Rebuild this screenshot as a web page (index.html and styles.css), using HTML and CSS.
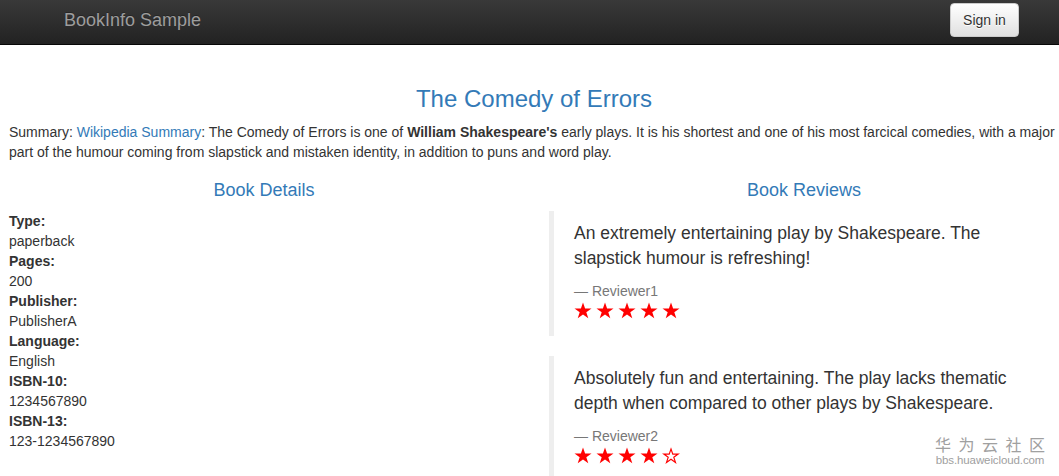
FILE: index.html
```html
<!DOCTYPE html>
<html lang="en">
<head>
<meta charset="utf-8">
<title>Simple Bookstore App</title>
<link rel="stylesheet" href="styles.css">
</head>
<body>
<nav class="navbar">
  <div class="navbar-inner">
    <a class="brand" href="#">BookInfo Sample</a>
    <button type="button" class="btn-signin">Sign in</button>
  </div>
</nav>

<main class="page">
  <h3 class="title">The Comedy of Errors</h3>
  <p class="summary">Summary: <a href="#">Wikipedia Summary</a>: The Comedy of Errors is one of <b>William Shakespeare's</b> early plays. It is his shortest and one of his most farcical comedies, with a major part of the humour coming from slapstick and mistaken identity, in addition to puns and word play.</p>

  <div class="row">
    <section class="col">
      <h4 class="col-title">Book Details</h4>
      <dl class="details">
        <dt>Type:</dt><dd>paperback</dd>
        <dt>Pages:</dt><dd>200</dd>
        <dt>Publisher:</dt><dd>PublisherA</dd>
        <dt>Language:</dt><dd>English</dd>
        <dt>ISBN-10:</dt><dd>1234567890</dd>
        <dt>ISBN-13:</dt><dd>123-1234567890</dd>
      </dl>
    </section>
    <section class="col">
      <h4 class="col-title">Book Reviews</h4>
      <blockquote class="review">
        <p>An extremely entertaining play by Shakespeare. The slapstick humour is refreshing!</p>
        <small>Reviewer1</small>
        <div class="stars">
          <svg class="star" viewBox="0 0 20 19"><path class="full" d="M10 0.5L12.35 7.2H19.5L13.7 11.4L15.9 18.3L10 14.1L4.1 18.3L6.3 11.4L0.5 7.2H7.65Z"/></svg>
          <svg class="star" viewBox="0 0 20 19"><path class="full" d="M10 0.5L12.35 7.2H19.5L13.7 11.4L15.9 18.3L10 14.1L4.1 18.3L6.3 11.4L0.5 7.2H7.65Z"/></svg>
          <svg class="star" viewBox="0 0 20 19"><path class="full" d="M10 0.5L12.35 7.2H19.5L13.7 11.4L15.9 18.3L10 14.1L4.1 18.3L6.3 11.4L0.5 7.2H7.65Z"/></svg>
          <svg class="star" viewBox="0 0 20 19"><path class="full" d="M10 0.5L12.35 7.2H19.5L13.7 11.4L15.9 18.3L10 14.1L4.1 18.3L6.3 11.4L0.5 7.2H7.65Z"/></svg>
          <svg class="star" viewBox="0 0 20 19"><path class="full" d="M10 0.5L12.35 7.2H19.5L13.7 11.4L15.9 18.3L10 14.1L4.1 18.3L6.3 11.4L0.5 7.2H7.65Z"/></svg>
        </div>
      </blockquote>
      <blockquote class="review">
        <p>Absolutely fun and entertaining. The play lacks thematic depth when compared to other plays by Shakespeare.</p>
        <small>Reviewer2</small>
        <div class="stars">
          <svg class="star" viewBox="0 0 20 19"><path class="full" d="M10 0.5L12.35 7.2H19.5L13.7 11.4L15.9 18.3L10 14.1L4.1 18.3L6.3 11.4L0.5 7.2H7.65Z"/></svg>
          <svg class="star" viewBox="0 0 20 19"><path class="full" d="M10 0.5L12.35 7.2H19.5L13.7 11.4L15.9 18.3L10 14.1L4.1 18.3L6.3 11.4L0.5 7.2H7.65Z"/></svg>
          <svg class="star" viewBox="0 0 20 19"><path class="full" d="M10 0.5L12.35 7.2H19.5L13.7 11.4L15.9 18.3L10 14.1L4.1 18.3L6.3 11.4L0.5 7.2H7.65Z"/></svg>
          <svg class="star" viewBox="0 0 20 19"><path class="full" d="M10 0.5L12.35 7.2H19.5L13.7 11.4L15.9 18.3L10 14.1L4.1 18.3L6.3 11.4L0.5 7.2H7.65Z"/></svg>
          <svg class="star" viewBox="0 0 20 19"><path class="empty" d="M10 2.2L12 7.9H18L13.1 11.4L15 17.2L10 13.6L5 17.2L6.9 11.4L2 7.9H8Z"/></svg>
        </div>
      </blockquote>
    </section>
  </div>
</main>

<div class="watermark">
  <div class="wm-cn">华为云社区</div>
  <div class="wm-url">bbs.huaweicloud.com</div>
</div>
</body>
</html>
```

FILE: styles.css
```css
* { box-sizing: border-box; }

html {
  margin: 0;
  padding: 0;
  overflow: hidden;
}

body {
  margin: 0;
  padding: 0;
  background: #fff;
  font-family: "Liberation Sans", Arial, sans-serif;
  font-size: 14px;
  line-height: 20px;
  color: #333;
  position: relative;
  width: 1059px;
  height: 476px;
  overflow: hidden;
}

a { color: #337ab7; text-decoration: none; }

/* Navbar */
.navbar {
  height: 45px;
  background: linear-gradient(to bottom, #393939 0%, #222 100%);
  border-bottom: 1px solid #080808;
}

.navbar-inner {
  display: flex;
  align-items: flex-start;
  justify-content: space-between;
  padding: 0 40px 0 64px;
}

.brand {
  font-size: 18px;
  line-height: 20px;
  color: #9d9d9d;
  padding-top: 10px;
  text-shadow: 0 -1px 0 rgba(0,0,0,.25);
}

.btn-signin {
  margin-top: 3px;
  width: 69px;
  height: 34px;
  padding: 6px 12px;
  font-family: "Liberation Sans", Arial, sans-serif;
  font-size: 14px;
  line-height: 20px;
  color: #333;
  background: linear-gradient(to bottom, #fff 0%, #e0e0e0 100%);
  border: 1px solid #ccc;
  border-radius: 4px;
  text-shadow: 0 1px 0 #fff;
  box-shadow: inset 0 1px 0 rgba(255,255,255,.15), 0 1px 1px rgba(0,0,0,.075);
}

/* Page */
.page {
  padding: 21px 0 0 9px;
}

.title {
  margin: 20px 0 10px;
  font-size: 24px;
  line-height: 26.4px;
  font-weight: 500;
  color: #337ab7;
  text-align: center;
}

.summary {
  margin: 0 0 10px;
}

.row {
  display: grid;
  grid-template-columns: 510px 510px;
  column-gap: 30px;
}

.col-title {
  margin: 9px 0 10px;
  font-size: 18px;
  line-height: 19.8px;
  font-weight: 500;
  color: #337ab7;
  text-align: center;
}

.details {
  margin: 0 0 20px;
}

.details dt { font-weight: bold; }
.details dd { margin: 0; }

/* Reviews */
.review {
  margin: 0 0 20px;
  padding: 10px 20px;
  border-left: 5px solid #eee;
  font-size: 17.5px;
  line-height: 25px;
}

.review p {
  margin: 0 0 10px;
}

.review small {
  display: block;
  font-size: 14px;
  line-height: 20px;
  color: #777;
}

.review small::before {
  content: "\2014 \00A0";
}

.stars {
  display: flex;
  gap: 4px;
  height: 25px;
  padding-top: 1px;
}

.star {
  width: 18px;
  height: 17px;
}

.star .full { fill: #f00; }
.star .empty { fill: none; stroke: #f00; stroke-width: 1.3; }

/* Watermark */
.watermark {
  position: absolute;
  left: 935px;
  top: 435px;
  color: #a0a0a0;
  white-space: nowrap;
  text-align: center;
}

.wm-cn {
  font-family: "Noto Sans CJK SC", sans-serif;
  font-size: 16px;
  line-height: 19px;
  letter-spacing: 7.5px;
  margin-right: -7.5px;
}

.wm-url {
  font-family: "Liberation Sans", Arial, sans-serif;
  font-size: 11.5px;
  line-height: 13px;
  letter-spacing: -0.1px;
}
```
